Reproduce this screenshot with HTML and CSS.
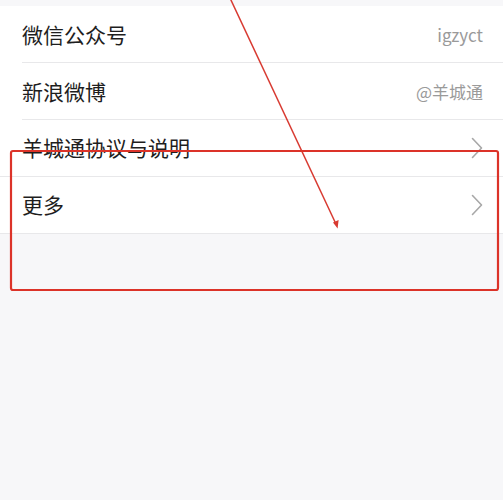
FILE: index.html
```html
<!DOCTYPE html>
<html lang="zh-CN">
<head>
<meta charset="utf-8">
<title>设置</title>
<link rel="stylesheet" href="styles.css">
</head>
<body>
<div class="page">
  <div class="top-gap"></div>
  <ul class="list">
    <li class="row inset">
      <span class="label">微信公众号</span>
      <span class="value">igzyct</span>
    </li>
    <li class="row inset">
      <span class="label">新浪微博</span>
      <span class="value">@羊城通</span>
    </li>
    <li class="row full">
      <span class="label">羊城通协议与说明</span>
      <svg class="chev" viewBox="0 0 12 22" width="12" height="22"><path d="M1.5 1.5 L10.5 11 L1.5 20.5" fill="none" stroke="#a8a8a8" stroke-width="1.6" stroke-linecap="round" stroke-linejoin="round"/></svg>
    </li>
    <li class="row full">
      <span class="label">更多</span>
      <svg class="chev" viewBox="0 0 12 22" width="12" height="22"><path d="M1.5 1.5 L10.5 11 L1.5 20.5" fill="none" stroke="#a8a8a8" stroke-width="1.6" stroke-linecap="round" stroke-linejoin="round"/></svg>
    </li>
  </ul>
  <svg class="annot" viewBox="0 0 503 500" width="503" height="500">
    <line x1="230" y1="-2" x2="335.5" y2="223" stroke="#d83a31" stroke-width="1.5"/>
    <polygon points="333,222.5 338.6,220 337.6,228.5" fill="#d83a31"/>
    <rect x="11" y="151" width="487" height="139" rx="2" fill="none" stroke="#dc3329" stroke-width="2.2"/>
  </svg>
</div>
</body>
</html>
```
FILE: styles.css
```css
html, body {
  margin: 0;
  padding: 0;
  background: #f7f7f9;
}
body {
  font-family: "Noto Sans CJK SC", "Noto Sans", sans-serif;
  color: #222;
}
.page {
  position: relative;
  width: 503px;
  height: 500px;
  overflow: hidden;
}
.top-gap {
  height: 6px;
}
.list {
  list-style: none;
  margin: 0;
  padding: 0;
  background: #fff;
}
.row {
  height: 57px;
  box-sizing: border-box;
  display: flex;
  align-items: center;
  justify-content: space-between;
  padding: 0 20px 0 22px;
  position: relative;
}
.row.inset {
  background-image: linear-gradient(#e8e8ea, #e8e8ea);
  background-size: calc(100% - 22px) 1px;
  background-position: right bottom;
  background-repeat: no-repeat;
}
.row.full {
  border-bottom: 1px solid #e8e8ea;
}
.label {
  font-size: 21px;
  line-height: 1;
  color: #1e1e1e;
  padding-bottom: 1px;
}
.value {
  font-size: 17px;
  color: #9a9a9a;
  line-height: 1;
}
.chev {
  display: block;
}
.annot {
  position: absolute;
  left: 0;
  top: 0;
  pointer-events: none;
}
```
